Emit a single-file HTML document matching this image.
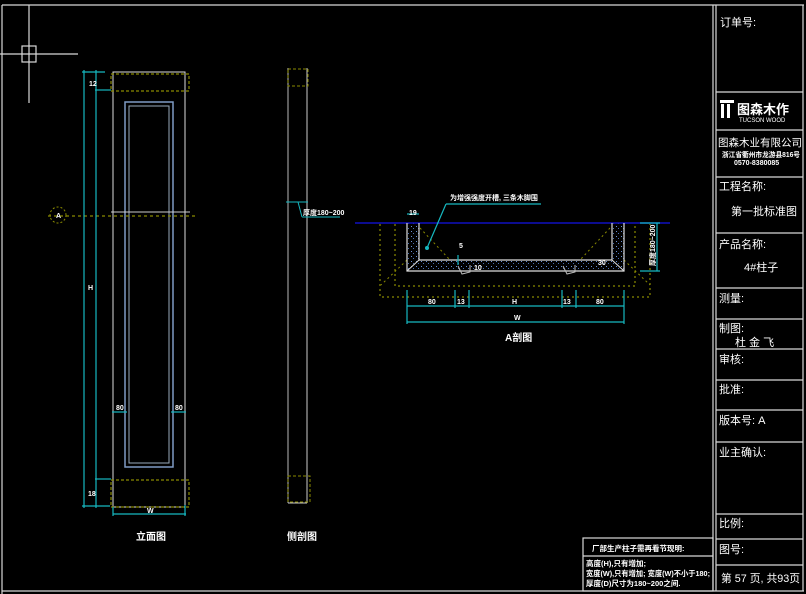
<!DOCTYPE html>
<html><head><meta charset="utf-8"><style>
html,body{margin:0;padding:0;background:#000;width:806px;height:594px;overflow:hidden}
svg{display:block}
text{font-family:"Liberation Sans","Noto Sans CJK SC",sans-serif;fill:#fff}
</style></head><body>
<svg width="806" height="594" viewBox="0 0 806 594">
<defs>
<pattern id="dots" width="5" height="5" patternUnits="userSpaceOnUse">
<rect x="1" y="1" width="1" height="1" fill="#6a8fd0"/><rect x="3" y="3" width="1" height="1" fill="#4a6fb0"/>
</pattern>
</defs>
<rect width="806" height="594" fill="#000"/>
<g stroke="#d8d8d8" stroke-width="1.2" fill="none">
<line x1="2" y1="5" x2="804" y2="5"/>
<line x1="2" y1="5" x2="2" y2="594"/>
<line x1="2" y1="591" x2="804" y2="591"/>
<line x1="803" y1="5" x2="803" y2="591"/>
<line x1="713" y1="5" x2="713" y2="591"/>
<line x1="716" y1="5" x2="716" y2="591"/>
<line x1="716" y1="92" x2="803" y2="92"/>
<line x1="716" y1="130" x2="803" y2="130"/>
<line x1="716" y1="177" x2="803" y2="177"/>
<line x1="716" y1="233" x2="803" y2="233"/>
<line x1="716" y1="288" x2="803" y2="288"/>
<line x1="716" y1="319" x2="803" y2="319"/>
<line x1="716" y1="349" x2="803" y2="349"/>
<line x1="716" y1="380" x2="803" y2="380"/>
<line x1="716" y1="410" x2="803" y2="410"/>
<line x1="716" y1="442" x2="803" y2="442"/>
<line x1="716" y1="514" x2="803" y2="514"/>
<line x1="716" y1="539" x2="803" y2="539"/>
<line x1="716" y1="565" x2="803" y2="565"/>
<rect x="583" y="538" width="130" height="53"/>
<line x1="583" y1="556" x2="713" y2="556"/>
<line x1="0" y1="54" x2="78" y2="54"/>
<line x1="29" y1="5" x2="29" y2="103"/>
<rect x="22" y="46" width="14" height="16"/>
</g>
<g font-size="11">
<text x="720" y="26">订单号:</text>
<text x="718" y="146" font-size="10.5" textLength="84" lengthAdjust="spacingAndGlyphs">图森木业有限公司</text>
<text x="722" y="157" font-size="7" font-weight="bold" textLength="78" lengthAdjust="spacingAndGlyphs">浙江省衢州市龙游县816号</text>
<text x="734" y="165" font-size="7" font-weight="bold">0570-8380085</text>
<text x="719" y="190">工程名称:</text>
<text x="731" y="215">第一批标准图</text>
<text x="719" y="248">产品名称:</text>
<text x="744" y="271">4#柱子</text>
<text x="719" y="302">测量:</text>
<text x="719" y="332">制图:</text>
<text x="735" y="346">杜 金 飞</text>
<text x="719" y="363">审核:</text>
<text x="719" y="393">批准:</text>
<text x="719" y="424">版本号: A</text>
<text x="719" y="456">业主确认:</text>
<text x="719" y="527">比例:</text>
<text x="719" y="553">图号:</text>
<text x="721" y="582" textLength="79" lengthAdjust="spacingAndGlyphs">第 57 页, 共93页</text>
</g>
<g>
<rect x="720" y="100" width="14" height="3" fill="#fff"/>
<rect x="721" y="104" width="3" height="14" fill="#fff"/>
<rect x="727" y="104" width="3" height="14" fill="#fff"/>
<text x="737" y="114" font-size="13" font-weight="bold">图森木作</text>
<text x="739" y="122" font-size="6">TUCSON WOOD</text>
</g>
<g font-size="7.5" font-weight="bold">
<text x="592" y="551">厂部生产柱子需再看节现明:</text>
<text x="586" y="566">高度(H),只有增加;</text>
<text x="586" y="576" textLength="124" lengthAdjust="spacingAndGlyphs">宽度(W),只有增加; 宽度(W)不小于180;</text>
<text x="586" y="586">厚度(D)尺寸为180~200之间.</text>
</g>
<g fill="none">
<rect x="113" y="72" width="72" height="435" stroke="#ddd" stroke-width="1"/>
<rect x="125" y="102" width="48" height="365" stroke="#7f9bc4" stroke-width="1.5"/>
<rect x="129" y="106" width="40" height="357" stroke="#9ab" stroke-width="1"/>
<rect x="111" y="74" width="78" height="17" stroke="#8a8a00" stroke-width="1.2" stroke-dasharray="3,2"/>
<rect x="111" y="480" width="78" height="27" stroke="#8a8a00" stroke-width="1.2" stroke-dasharray="3,2"/>
<line x1="48" y1="216" x2="195" y2="216" stroke="#8a8a00" stroke-width="1.2" stroke-dasharray="3,3"/>
<line x1="111" y1="212" x2="190" y2="212" stroke="#ccc"/>
<circle cx="58" cy="215" r="8" stroke="#8a8a00" stroke-dasharray="2,2"/>
<g stroke="#16b8c0" stroke-width="1.2">
<line x1="84" y1="70" x2="84" y2="508"/>
<line x1="96" y1="70" x2="96" y2="508"/>
<line x1="82" y1="72" x2="105" y2="72"/>
<line x1="95" y1="90" x2="111" y2="90"/>
<line x1="82" y1="506" x2="110" y2="506"/>
<line x1="95" y1="479" x2="111" y2="479"/>
<line x1="113" y1="514" x2="186" y2="514"/>
<line x1="113" y1="507" x2="113" y2="516"/>
<line x1="185" y1="505" x2="185" y2="516"/>
<line x1="112" y1="412" x2="127" y2="412"/>
<line x1="171" y1="412" x2="186" y2="412"/>
</g>
</g>
<g font-size="7" font-weight="bold">
<text x="56" y="218">A</text>
<text x="89" y="86">12</text>
<text x="88" y="496">18</text>
<text x="88" y="290">H</text>
<text x="116" y="410">80</text>
<text x="175" y="410">80</text>
<text x="147" y="513">W</text>
<text x="136" y="540" font-size="10">立面图</text>
<text x="287" y="540" font-size="10">侧剖图</text>
</g>
<g fill="none">
<line x1="288" y1="68" x2="288" y2="503" stroke="#999" stroke-width="1.2"/>
<line x1="307" y1="68" x2="307" y2="503" stroke="#aaa" stroke-width="1.2"/>
<line x1="288" y1="503" x2="307" y2="503" stroke="#ccc"/>
<rect x="288" y="69" width="20" height="17" stroke="#8a8a00" stroke-dasharray="3,2"/>
<rect x="288" y="476" width="22" height="26" stroke="#8a8a00" stroke-dasharray="3,2"/>
<g stroke="#16b8c0"><line x1="286" y1="202" x2="308" y2="202"/><line x1="298" y1="202" x2="302" y2="217"/><line x1="302" y1="217" x2="340" y2="217"/></g>
<text x="303" y="215" font-size="7" font-weight="bold" fill="#fff" stroke="none">厚度180~200</text>
</g>
<g fill="none">
<path d="M407 223 V271 H624 V223 H612 V260 H419 V223 Z" fill="url(#dots)" stroke="none"/>
<line x1="355" y1="223" x2="670" y2="223" stroke="#1010c0" stroke-width="1.5"/>
<path d="M380 224 V297 H650 V224 M395 224 V286 H635 V224" stroke="#8a8a00" stroke-dasharray="2,3" stroke-width="1.2"/>
<line x1="407" y1="260" x2="381" y2="285" stroke="#8a8a00" stroke-dasharray="2,3"/>
<line x1="624" y1="260" x2="650" y2="285" stroke="#8a8a00" stroke-dasharray="2,3"/>
<line x1="420" y1="228" x2="450" y2="260" stroke="#8a8a00" stroke-dasharray="2,3"/>
<line x1="610" y1="228" x2="580" y2="260" stroke="#8a8a00" stroke-dasharray="2,3"/>
<path d="M407 223 V271 H624 V223 M419 223 V260 H612 V223" stroke="#ddd" stroke-width="1.2"/>
<path d="M407 271 L419 260 M624 271 L612 260" stroke="#ddd"/>
<path d="M458 266 L462 274 L470 272 L470 265 M563 266 L567 274 L575 272 L575 265" stroke="#bbb"/>
<g stroke="#16b8c0" stroke-width="1.2">
<line x1="407" y1="306" x2="624" y2="306"/>
<line x1="407" y1="322" x2="624" y2="322"/>
<line x1="407" y1="290" x2="407" y2="324"/>
<line x1="455" y1="290" x2="455" y2="308"/>
<line x1="469" y1="290" x2="469" y2="308"/>
<line x1="562" y1="290" x2="562" y2="308"/>
<line x1="576" y1="290" x2="576" y2="308"/>
<line x1="624" y1="290" x2="624" y2="324"/>
<line x1="407" y1="214" x2="419" y2="214"/>
<line x1="640" y1="223" x2="660" y2="223"/>
<line x1="640" y1="271" x2="660" y2="271"/>
<line x1="657" y1="223" x2="657" y2="271"/>
<line x1="427" y1="248" x2="446" y2="204"/>
<line x1="446" y1="204" x2="541" y2="204"/>
<line x1="458" y1="265" x2="458" y2="255"/>
</g>
<circle cx="427" cy="248" r="2" fill="#16b8c0"/>
</g>
<g font-size="7" font-weight="bold">
<text x="450" y="200">为增强强度开槽, 三条木脚围</text>
<text x="409" y="215">19</text>
<text x="459" y="248">5</text>
<text x="474" y="270">10</text>
<text x="598" y="265">30</text>
<text x="428" y="304">80</text>
<text x="457" y="304">13</text>
<text x="512" y="304">H</text>
<text x="563" y="304">13</text>
<text x="596" y="304">80</text>
<text x="514" y="320">W</text>
<text x="655" y="266" transform="rotate(-90 655 266)">厚度180~200</text>
<text x="505" y="341" font-size="10">A剖图</text>
</g>
</svg>
</body></html>
